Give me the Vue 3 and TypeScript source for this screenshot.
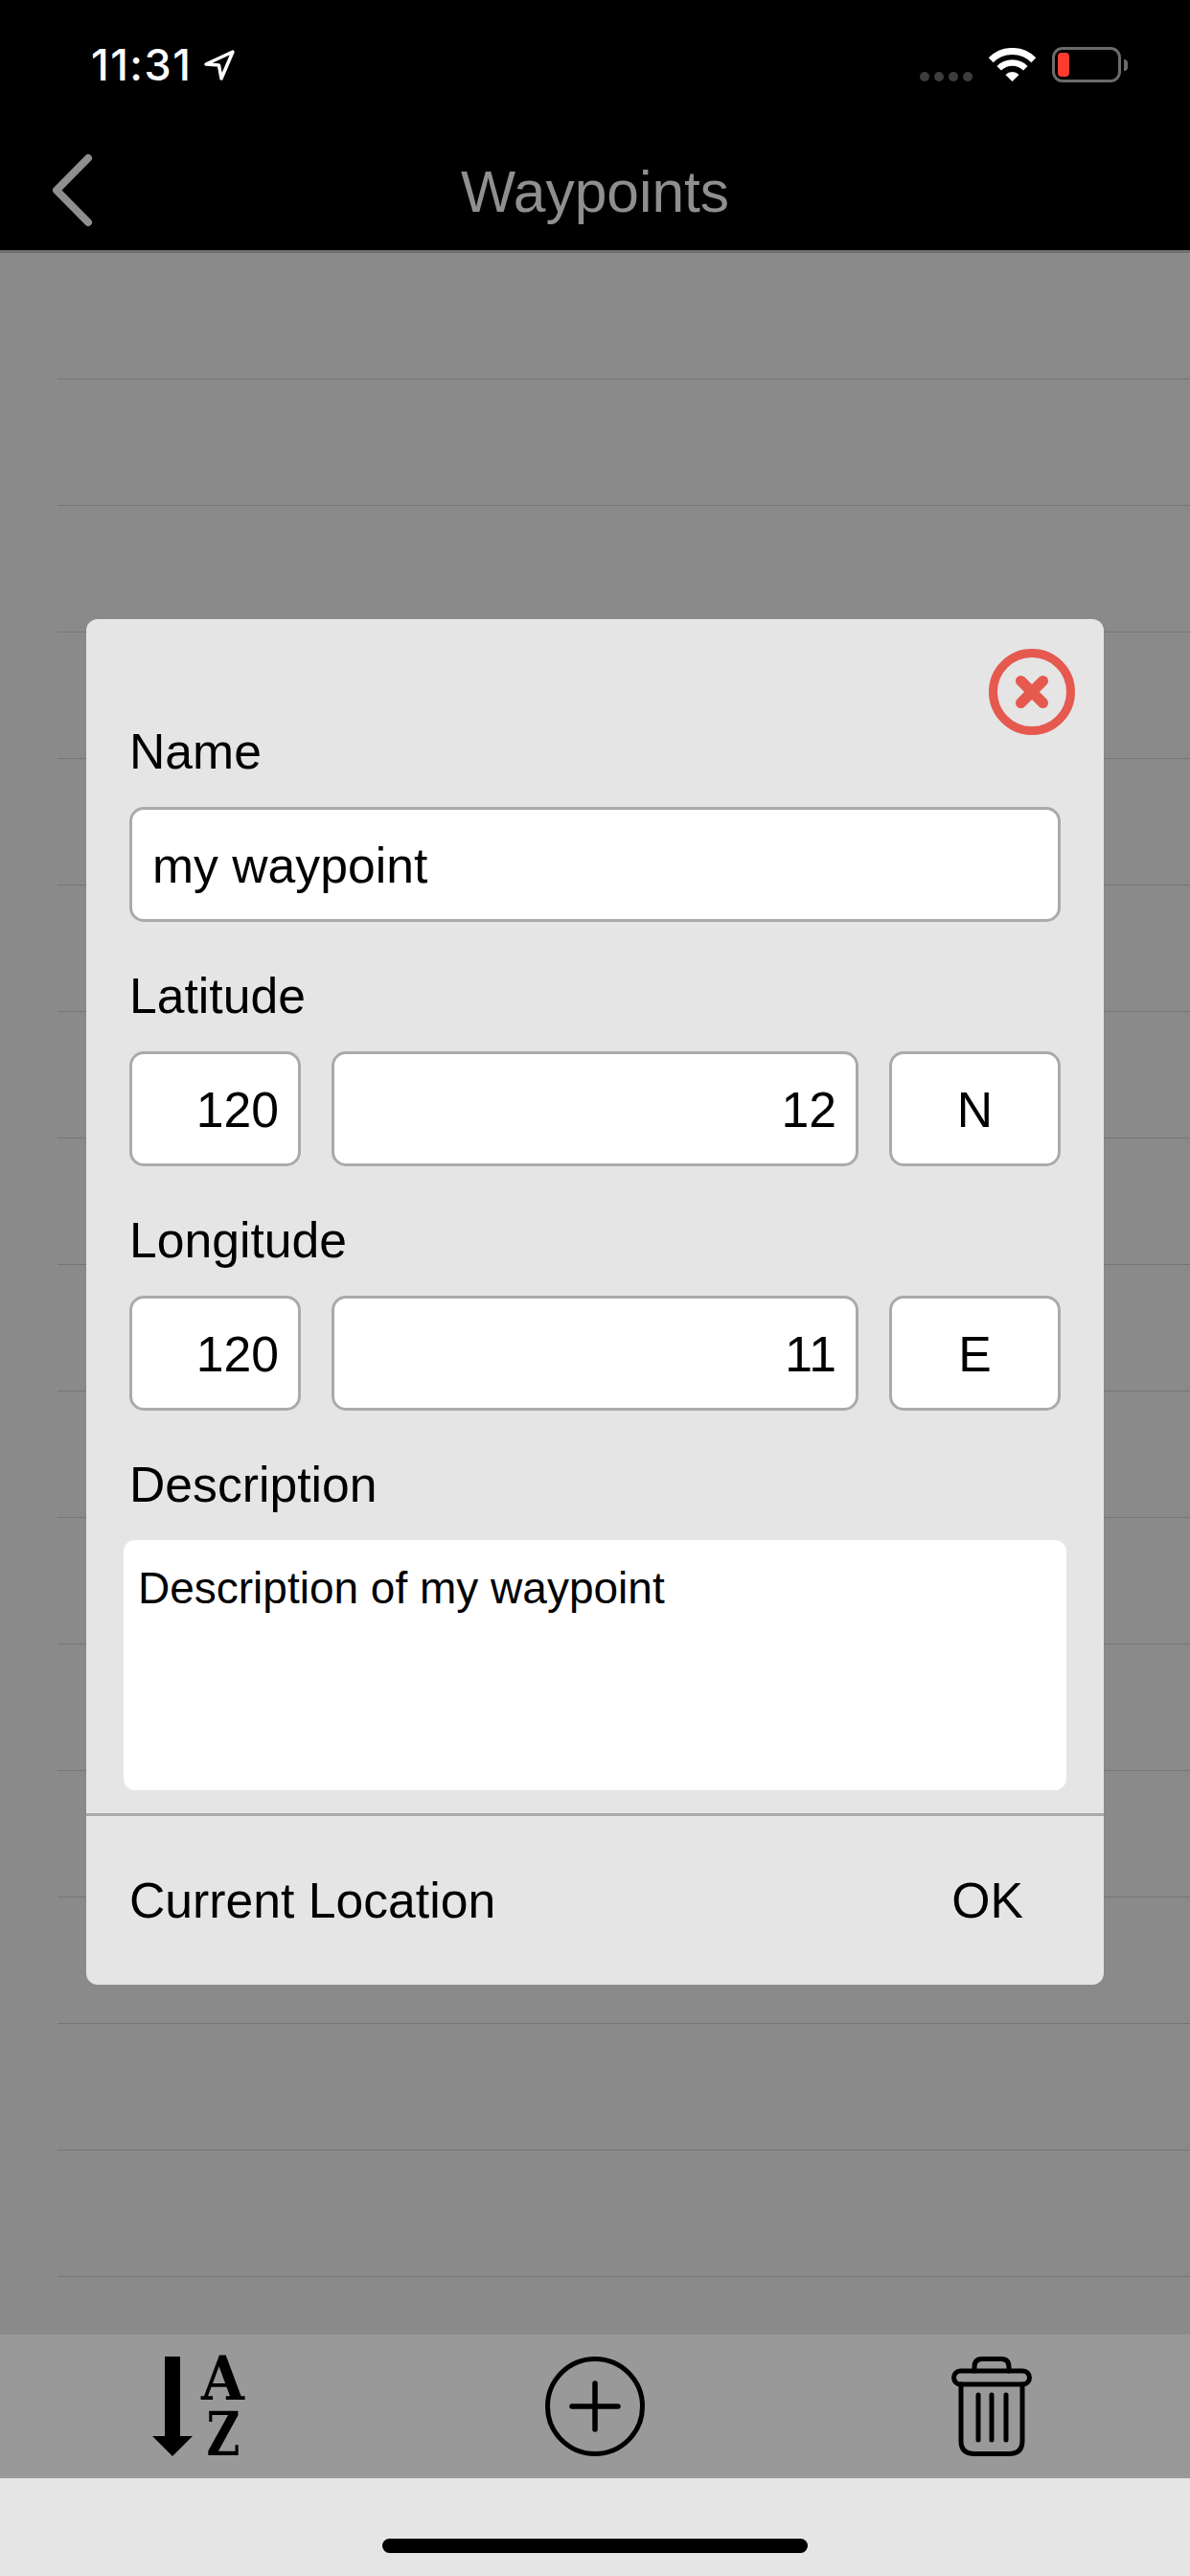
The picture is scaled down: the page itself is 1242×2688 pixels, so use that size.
<script setup lang="ts">
const rows: number[] = Array.from({ length: 16 }, (_, i) => i)
const fields = [
  { label: 'Latitude', deg: '120', min: '12', hemi: 'N' },
  { label: 'Longitude', deg: '120', min: '11', hemi: 'E' },
]
</script>

<template>
  <div class="phone">
    <header class="top">
      <div class="status">
        <div class="clock">
          <span class="time">11:31</span>
          <svg class="loc" width="34" height="34" viewBox="0 0 34 34">
            <path d="M31 3 L3 16 L16.5 17 L19 31 Z" fill="none" stroke="#fff" stroke-width="3.5" stroke-linejoin="round" />
          </svg>
        </div>
        <div class="indicators">
          <div class="dots"><i></i><i></i><i></i><i></i></div>
          <svg class="wifi" width="49" height="35" viewBox="0 0 49 35">
            <path d="M2.2 12.7 A31.5 31.5 0 0 1 46.8 12.7" fill="none" stroke="#fff" stroke-width="7" />
            <path d="M10.7 21.2 A19.5 19.5 0 0 1 38.3 21.2" fill="none" stroke="#fff" stroke-width="6.5" />
            <path d="M24.5 35 L17.4 27.9 A10 10 0 0 1 31.6 27.9 Z" fill="#fff" />
          </svg>
          <div class="battery">
            <div class="cell"><b></b></div>
            <span class="nub"></span>
          </div>
        </div>
      </div>
      <nav class="nav">
        <svg class="back" width="42" height="76" viewBox="0 0 42 76">
          <path d="M37 4 L4 37.5 L37 71" fill="none" stroke="#8f8f8f" stroke-width="8" stroke-linecap="round" stroke-linejoin="round" />
        </svg>
        <h1 class="title">Waypoints</h1>
      </nav>
    </header>

    <main class="main">
      <div v-for="r in rows" :key="r" class="row"></div>

      <section class="modal">
        <svg class="close" width="90" height="90" viewBox="0 0 90 90">
          <circle cx="45" cy="45" r="40.5" fill="none" stroke="#e5594f" stroke-width="9" />
          <path d="M33.5 33.5 L56.5 56.5 M56.5 33.5 L33.5 56.5" fill="none" stroke="#e5594f" stroke-width="11" stroke-linecap="round" />
        </svg>

        <div class="body">
          <div class="label first">Name</div>
          <div class="box name">my waypoint</div>

          <template v-for="f in fields" :key="f.label">
            <div class="label">{{ f.label }}</div>
            <div class="triple">
              <div class="box num">{{ f.deg }}</div>
              <div class="box num wide">{{ f.min }}</div>
              <div class="box hemi">{{ f.hemi }}</div>
            </div>
          </template>

          <div class="label">Description</div>
          <div class="area">Description of my waypoint</div>
        </div>

        <footer class="foot">
          <span>Current Location</span>
          <span>OK</span>
        </footer>
      </section>
    </main>

    <div class="toolbar">
      <div class="tool">
        <div class="sort">
          <svg width="42" height="104" viewBox="0 0 42 104">
            <path d="M13 0 H29 V83 H42 L21 104 L0 83 H13 Z" fill="#000" />
          </svg>
          <div class="letters">
            <span class="letter a">A</span>
            <span class="letter z">Z</span>
          </div>
        </div>
      </div>
      <div class="tool">
        <svg width="104" height="104" viewBox="0 0 104 104">
          <circle cx="52" cy="52" r="49.5" fill="none" stroke="#000" stroke-width="5" />
          <path d="M52 28 V76 M28 52 H76" fill="none" stroke="#000" stroke-width="5.5" stroke-linecap="round" />
        </svg>
      </div>
      <div class="tool">
        <svg width="84" height="104" viewBox="0 0 84 104" fill="none" stroke="#000" stroke-width="5" stroke-linecap="round" stroke-linejoin="round">
          <path d="M24 15 V11 Q24 2.5 32 2.5 H52 Q60 2.5 60 11 V15" />
          <rect x="2.5" y="15" width="79" height="14" rx="7" />
          <path d="M10 29 V88 Q10 101.5 24 101.5 H60 Q74 101.5 74 88 V29" />
          <path d="M28 40 V87 M42 40 V87 M57 40 V87" />
        </svg>
      </div>
    </div>

    <div class="home"><span class="bar"></span></div>
  </div>
</template>

<style>
html, body { margin: 0; background: #000; }
</style>

<style scoped>
.phone {
  width: 1242px;
  height: 2688px;
  display: flex;
  flex-direction: column;
  font-family: "Liberation Sans", Arial, sans-serif;
  color: #000;
  overflow: hidden;
}
.top {
  height: 264px;
  box-sizing: border-box;
  background: #000;
  border-bottom: 3px solid #707070;
  display: flex;
  flex-direction: column;
}
.status {
  height: 133px;
  box-sizing: border-box;
  display: flex;
  justify-content: space-between;
  padding: 50px 65px 0 95px;
}
.clock { display: flex; align-items: flex-start; gap: 12px; }
.time {
  font-family: Inter, "Liberation Sans", sans-serif;
  font-weight: 500;
  font-size: 45px;
  letter-spacing: 1.5px;
  line-height: 36px;
  color: #fff;
}
.loc { margin-top: 1px; }
.indicators { display: flex; align-items: flex-start; margin-top: -1px; }
.dots { display: flex; gap: 5px; margin: 26px 17px 0 0; }
.dots i { width: 10px; height: 10px; border-radius: 50%; background: #3d3d3d; }
.wifi { margin: 1px 17px 0 0; }
.battery { display: flex; align-items: center; gap: 3px; }
.cell {
  width: 72px;
  height: 37px;
  box-sizing: border-box;
  border: 3px solid #6b6b6b;
  border-radius: 11px;
  padding: 3px;
}
.cell b { display: block; width: 12px; height: 25px; border-radius: 4px; background: #ff3b30; }
.nub {
  width: 4px;
  height: 12px;
  background: #6b6b6b;
  border-radius: 0 4px 4px 0;
}
.nav {
  position: relative;
  flex: 1;
  display: flex;
  align-items: center;
  justify-content: center;
}
.back { position: absolute; left: 55px; top: 28px; }
.title {
  margin: 6px 0 0;
  font-size: 60.5px;
  font-weight: 400;
  line-height: 70px;
  color: #8f8f8f;
}

.main {
  position: relative;
  flex: 1;
  background: #8a8a8a;
  overflow: hidden;
}
.row {
  height: 132px;
  box-sizing: border-box;
  margin-left: 60px;
  border-bottom: 1px solid #767676;
}

.modal {
  position: absolute;
  left: 90px;
  top: 382px;
  width: 1062px;
  background: #e5e5e5;
  border-radius: 12px;
  font-size: 51.7px;
}
.close { position: absolute; top: 31px; right: 30px; }
.body { padding: 108px 45px 24px; display: flex; flex-direction: column; }
.label { line-height: 60px; margin: 47px 0 28px; }
.label.first { margin-top: 0; }
.box {
  height: 120px;
  box-sizing: border-box;
  display: flex;
  align-items: center;
  background: #fff;
  border: 3px solid #aaa;
  border-radius: 15px;
  padding-top: 2px;
}
.name { padding-left: 21px; }
.triple { display: flex; gap: 32px; }
.num { width: 179px; justify-content: flex-end; padding-right: 20px; }
.num.wide { flex: 1; }
.hemi { width: 179px; justify-content: center; }
.area {
  height: 261px;
  box-sizing: border-box;
  margin: 0 -6px;
  padding: 23px 15px 0;
  background: #fff;
  border-radius: 12px;
  font-size: 46px;
  line-height: 54px;
}
.foot {
  height: 179px;
  box-sizing: border-box;
  border-top: 3px solid #aaa;
  display: flex;
  align-items: center;
  justify-content: space-between;
  padding: 0 84px 0 45px;
}

.toolbar {
  height: 150px;
  flex: none;
  background: #999;
  display: grid;
  grid-template-columns: repeat(3, 1fr);
}
.tool { display: flex; align-items: center; justify-content: center; }
.sort { display: flex; width: 96px; height: 104px; gap: 9px; }
.letters {
  width: 45px;
  height: 104px;
  display: flex;
  flex-direction: column;
  justify-content: space-between;
  align-items: center;
}
.letter {
  display: block;
  height: 46px;
  font-family: "DejaVu Serif", serif;
  font-weight: 700;
  font-size: 63px;
  line-height: 46px;
  color: #000;
}
.letter.a { transform: scaleX(0.92); }
.letter.z { transform: scaleX(0.76); }
.home {
  height: 102px;
  flex: none;
  background: #e5e5e5;
  display: flex;
  justify-content: center;
  padding-top: 63px;
  box-sizing: border-box;
}
.bar { width: 444px; height: 15px; border-radius: 8px; background: #000; }
</style>
